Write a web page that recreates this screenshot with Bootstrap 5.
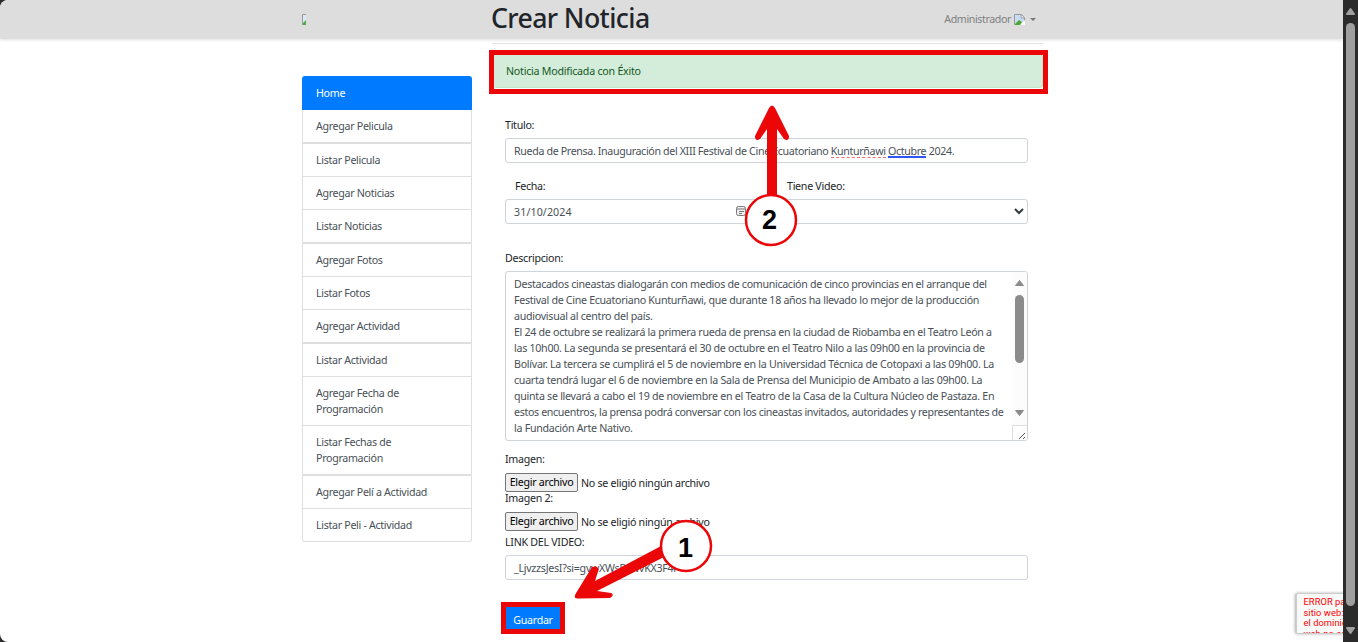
<!DOCTYPE html>
<html lang="es">
<head>
<meta charset="utf-8">
<title>Crear Noticia</title>
<link href="https://cdn.jsdelivr.net/npm/bootstrap@5.3.0/dist/css/bootstrap.min.css" rel="stylesheet">
<script src="https://cdn.jsdelivr.net/npm/bootstrap@5.3.0/dist/js/bootstrap.bundle.min.js"></script>
<style>
html,body{height:642px;overflow:hidden;background:#2b2b2b}
body{font:10.67px/16px "Noto Sans","Open Sans",sans-serif;letter-spacing:-.28px;color:#212529}
.page{width:1343px;height:642px;background:#fff;border-radius:8px 0 0 8px;overflow:hidden}
.topbar{height:39px;background:#ddd;box-shadow:0 1px 3px rgba(0,0,0,.13)}
.frame{width:741px;margin-left:302px}
.side{width:170px;margin-top:37px}
.topbar .logo{width:189px;padding-top:14px}
.topbar h1{font-size:26.67px;line-height:32px;font-weight:500;letter-spacing:-.6px;margin:2px 0 0}
.admin{color:#7f7f7f;margin:11px 7px 0 auto;height:16px}
.admin span{letter-spacing:-.4px}
.admin .broken{margin:3px 0 0 3px}
.admin .caret{margin:7px 0 0 5px}
.side .list-group-item{padding:8px 13px 0;height:33px;border:1px solid #dfdfdf;border-top:0;color:#495057;background:#fff}
.side .list-group-item.active{height:34px;padding:9px 14px 0;background:#007bff;border:0;color:#fff;margin:0}
.side .list-group-item.thick{height:34px;border-bottom-width:2px}
.side .list-group-item.two{height:49px}
.side .list-group-item.two.thick{height:50px}
.list-group.side{--bs-list-group-border-radius:3px;letter-spacing:-.31px}
.content{width:551px;margin-left:20px;padding-top:4px}
.content .rule{height:1px;background:#e5e5e5;margin-bottom:10px}
.ok{height:34px;margin:0 0 29px 1px;padding:8px 12px;background:#d4edda;border:1px solid #c3e6cb;border-radius:3px;color:#155724;letter-spacing:-.24px}
.fields{margin:0 15px 0 13px;width:523px}
.box{height:25px;border:1px solid #ced4da;border-radius:3px;padding:4px 8px;color:#495057;background:#fff;white-space:nowrap}
.lbl{height:16px;margin-bottom:5px;white-space:nowrap}
.area{height:170px;border:1px solid #ced4da;border-radius:3px;padding:4px 0 0 8px;color:#495057;overflow:hidden;white-space:nowrap;position:relative;letter-spacing:-.28px}
.area div{height:16px;width:max-content}
.area .t1{letter-spacing:-.315px}
.area .t2{letter-spacing:-.305px}
.area .t3{letter-spacing:-.348px}
.area svg{position:absolute;right:0;top:0}
.filebtn{height:19px;width:73px;border:1px solid #767676;border-radius:2px;background:#efefef;color:#000;text-align:center;line-height:17px}
.file{height:19px;gap:3px}
.file span{padding-top:2px}
.save{width:54px;height:22px;background:#007bff;color:#fff;border:0;border-radius:0;padding:3px 0 0;font:inherit;letter-spacing:inherit;margin:27px 0 0 1px}
.marks{position:absolute;left:0;top:0;pointer-events:none}
.marks text{font:bold 27px "Liberation Sans",sans-serif;letter-spacing:0}
.err{position:absolute;left:1296px;top:593px;width:62px;height:41px;background:#f9f9f9;border:1px solid #ccc;box-shadow:-1px 0 3px #aaa;border-radius:2px;font:9.33px/10.7px Roboto,sans-serif;letter-spacing:.05px;color:#f00;padding:3px 0 0 6.5px;overflow:hidden;white-space:nowrap}
.bar{position:absolute;left:1343px;top:0}
.spell{border-bottom:1px dashed #f07070;display:inline-block;height:15px;line-height:16px;vertical-align:top}
.gram{border-bottom:2px solid #2f56f0;display:inline-block;height:15px;line-height:16px;vertical-align:top}
</style>
</head>
<body>
<div class="page">
  <nav class="topbar"><div class="frame d-flex">
    <div class="logo"><svg class="d-block" width="5" height="12"><path d="M0 0h4v11H0z" fill="#dbe7fa"/><path d="M.5 11V.5H4" fill="none" stroke="#999"/><path d="M1 11V9l3-3v5z" fill="#4fae43"/></svg></div>
    <h1>Crear Noticia</h1>
    <div class="admin d-flex"><span>Administrador</span>
      <svg class="broken" width="11" height="12" viewBox="0 0 11 12"><path d="M.5.5h7l3 3v7H.5z" fill="#c9dbf6" stroke="#999"/><path d="M7 1v3h3" fill="#fff" stroke="#999"/><path d="M1 10l4-4 3 2-2 3H1z" fill="#4ca62f"/><path d="M6 11l5-5v5z" fill="#fff"/></svg>
      <svg class="caret" width="6" height="3"><path d="M0 0h6L3 3z" fill="#777"/></svg></div>
  </div></nav>
  <div class="frame d-flex align-items-start">
    <div class="list-group side flex-shrink-0">
      <a class="list-group-item active">Home</a>
      <a class="list-group-item thick">Agregar Pelicula</a>
      <a class="list-group-item">Listar Pelicula</a>
      <a class="list-group-item">Agregar Noticias</a>
      <a class="list-group-item thick">Listar Noticias</a>
      <a class="list-group-item">Agregar Fotos</a>
      <a class="list-group-item">Listar Fotos</a>
      <a class="list-group-item thick">Agregar Actividad</a>
      <a class="list-group-item">Listar Actividad</a>
      <a class="list-group-item two">Agregar Fecha de<br>Programación</a>
      <a class="list-group-item two thick">Listar Fechas de<br>Programación</a>
      <a class="list-group-item">Agregar Pelí a Actividad</a>
      <a class="list-group-item">Listar Peli - Actividad</a>
    </div>
    <main class="content flex-shrink-0">
      <div class="rule"></div>
      <div class="ok">Noticia Modificada con Éxito</div>
      <form class="fields">
        <div class="lbl">Titulo:</div>
        <div class="box" style="letter-spacing:-.35px">Rueda de Prensa. Inauguración del XIII Festival de Cine Ecuatoriano <span class="spell">Kunturñawi</span> <span class="gram">Octubre</span> 2024.</div>
        <div class="d-flex" style="margin-top:15px">
          <div style="width:272px"><div class="lbl" style="padding-left:10px">Fecha:</div>
            <div class="box d-flex justify-content-between" style="width:261px"><span style="letter-spacing:.1px">31/10/2024</span>
              <svg width="11" height="11" viewBox="0 0 11 11" style="margin:2px 10px 0 0"><rect x=".5" y=".5" width="9" height="9" rx="2" fill="#eee" stroke="#777"/><path d="M1 3h8M3 5.500h5M3 7.500h3" stroke="#777"/></svg></div></div>
          <div style="width:251px"><div class="lbl" style="padding-left:10px">Tiene Video:</div>
            <div class="box d-flex justify-content-between"><span>Si</span>
              <svg width="10" height="7" viewBox="0 0 10 7" style="margin:4px -5px 0 0"><path d="M1 1l4 4 4-4" fill="none" stroke="#343a40" stroke-width="2"/></svg></div></div>
        </div>
        <div class="lbl" style="margin-top:26px">Descripcion:</div>
        <div class="area">
          <div class="t1">Destacados cineastas dialogarán con medios de comunicación de cinco provincias en el arranque del</div>
          <div class="t2">Festival de Cine Ecuatoriano Kunturñawi, que durante 18 años ha llevado lo mejor de la producción</div>
          <div>audiovisual al centro del país.</div>
          <div class="t2">El 24 de octubre se realizará la primera rueda de prensa en la ciudad de Riobamba en el Teatro León a</div>
          <div>las 10h00. La segunda se presentará el 30 de octubre en el Teatro Nilo a las 09h00 en la provincia de</div>
          <div>Bolívar. La tercera se cumplirá el 5 de noviembre en la Universidad Técnica de Cotopaxi a las 09h00. La</div>
          <div>cuarta tendrá lugar el 6 de noviembre en la Sala de Prensa del Municipio de Ambato a las 09h00. La</div>
          <div>quinta se llevará a cabo el 19 de noviembre en el Teatro de la Casa de la Cultura Núcleo de Pastaza. En</div>
          <div class="t3">estos encuentros, la prensa podrá conversar con los cineastas invitados, autoridades y representantes de</div>
          <div>la Fundación Arte Nativo.</div>
          <svg width="15" height="168"><path d="M0 0h15v168H0z" fill="#fcfcfc"/><path d="M7.500 8.500l4 5h-8zM7.500 143.500l4-5h-8z" fill="#8b8b8b" stroke="#8b8b8b" stroke-linejoin="round"/><rect x="3" y="23" width="9" height="68" rx="4.500" fill="#8b8b8b"/><path d="M.5 168V153.500H15" fill="#fff" stroke="#ddd"/><path d="M7 167l6-6M11 167l2-2" stroke="#555"/></svg>
        </div>
        <div class="lbl" style="margin-top:10px;margin-bottom:6px">Imagen:</div>
        <div class="file d-flex"><div class="filebtn">Elegir archivo</div><span>No se eligió ningún archivo</span></div>
        <div class="lbl" style="margin:-2px 0 6px">Imagen 2:</div>
        <div class="file d-flex"><div class="filebtn">Elegir archivo</div><span>No se eligió ningún archivo</span></div>
        <div class="lbl" style="margin-top:3px">LINK DEL VIDEO:</div>
        <div class="box">_LjvzzsJesI?si=gvwXWsRvwvKX3F4r</div>
        <button type="button" class="save d-block">Guardar</button>
      </form>
    </main>
  </div>
</div>
<div class="err">ERROR para<br>sitio web:<br>el dominio<br>web no es</div>
<svg class="bar" width="15" height="642"><path d="M0 0h15v642H0z" fill="#2b2b2b"/><path d="M7.500 9l3.500 5H4zM7.500 633l3.500-5H4z" fill="#9f9f9f" stroke="#9f9f9f" stroke-width="2" stroke-linejoin="round"/><rect x="3" y="23" width="9" height="583" rx="4.500" fill="#9f9f9f"/></svg>
<svg class="marks" width="1358" height="642">
  <g fill="none" stroke="#eb0707"><path d="M491.500 52.500h554v39h-554zM503.500 604.500h59v27h-59z" stroke-width="5"/></g>
  <g fill="#eb0707"><path d="M767 198V129L760 139Q755 142 755 136L769 108Q772 103 775 108L789 136Q789 142 784 139L777 129V198Z"/>
  <path d="M663 545L595 581L598.500 570Q598 565 592 567L575.500 594Q573 599 579 598.500L610 598Q615 595 611 593L597 591L664 557Z"/></g>
  <g fill="#fff" stroke="#eb0707" stroke-width="2.500"><circle cx="771" cy="220" r="25"/><circle cx="686" cy="546" r="25"/></g>
  <text x="762" y="228.500">2</text><text x="678" y="557">1</text>
</svg>
</body>
</html>
